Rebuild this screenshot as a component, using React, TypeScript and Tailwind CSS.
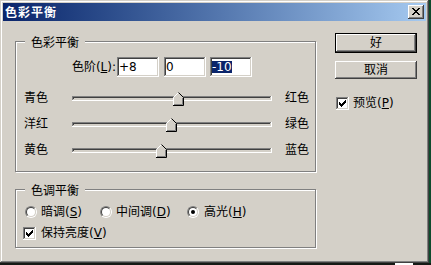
import React from "react";

const raised =
  "shadow-[inset_-1px_-1px_#404040,inset_1px_1px_#ffffff,inset_-2px_-2px_#808080,inset_2px_2px_#d4d0c8]";
const sunken =
  "shadow-[inset_-1px_-1px_#ffffff,inset_1px_1px_#808080,inset_-2px_-2px_#d4d0c8,inset_2px_2px_#404040]";

function CheckMark() {
  return (
    <svg width="7" height="7" viewBox="0 0 7 7">
      <path
        d="M0 2h1v3H0z M1 3h1v3H1z M2 4h1v3H2z M3 3h1v3H3z M4 2h1v3H4z M5 1h1v3H5z M6 0h1v3H6z"
        fill="#000"
      />
    </svg>
  );
}

function CheckBox() {
  return (
    <div className={`w-[13px] h-[13px] bg-white flex items-center justify-center shrink-0 ${sunken}`}>
      <CheckMark />
    </div>
  );
}

function Radio({ on }: { on?: boolean }) {
  return (
    <div className="w-[12px] h-[12px] rounded-full border border-t-[#808080] border-l-[#808080] border-r-white border-b-white flex shrink-0">
      <div className="flex-1 rounded-full border border-t-[#404040] border-l-[#404040] border-r-[#d4d0c8] border-b-[#d4d0c8] bg-white flex items-center justify-center">
        {on && <div className="w-[4px] h-[4px] rounded-full bg-black" />}
      </div>
    </div>
  );
}

function Thumb() {
  return (
    <svg width="11" height="14" viewBox="0 0 11 14">
      <polygon points="5.5,0 11,5.5 11,14 0,14 0,5.5" fill="#d4d0c8" />
      <polyline points="0.5,13 0.5,5.5 5.5,0.5" fill="none" stroke="#ffffff" strokeWidth="1" />
      <polyline points="5.5,0.5 10.5,5.5 10.5,13.5 0,13.5" fill="none" stroke="#000000" strokeWidth="1" />
      <polyline points="9.5,6 9.5,12.5 1,12.5" fill="none" stroke="#808080" strokeWidth="1" />
    </svg>
  );
}

function SliderRow({ left, right, pos }: { left: string; right: string; pos: number }) {
  return (
    <div className="h-[26px] flex pl-[8px]">
      <div className="w-[48px] h-[26px] flex items-center leading-[16px]">{left}</div>
      <div className={`relative w-[200px] h-[5px] mt-[11px] bg-[#d4d0c8] ${sunken}`}>
        <div className="absolute top-[-4px] flex" style={{ left: pos }}>
          <Thumb />
        </div>
      </div>
      <div className="ml-[13px] h-[26px] flex items-center leading-[16px]">{right}</div>
    </div>
  );
}

function CloseGlyph() {
  return (
    <svg width="8" height="7" viewBox="0 0 8 7">
      <path
        d="M0 0h2v1H0z M6 0h2v1H6z M1 1h2v1H1z M5 1h2v1H5z M2 2h4v1H2z M3 3h2v1H3z M2 4h4v1H2z M1 5h2v1H1z M5 5h2v1H5z M0 6h2v1H0z M6 6h2v1H6z"
        fill="#000"
      />
    </svg>
  );
}

export default function App() {
  return (
    <div className="w-[431px] h-[265px] bg-[#161a16] flex flex-col overflow-hidden text-black text-[12px] [font-family:'DejaVu_Sans','Noto_Sans_CJK_SC',sans-serif]">
      <div className="flex">
        <div className="w-[429px] h-[263px] shrink-0 bg-[#d4d0c8] p-[3px] flex flex-col shadow-[inset_-1px_-1px_#404040,inset_1px_1px_#d4d0c8,inset_-2px_-2px_#808080,inset_2px_2px_#ffffff]">
          {/* Title bar */}
          <div className="h-[18px] flex items-center bg-linear-to-r from-[#0a246a] to-[#a6caf0] pl-[2px] pr-[2px]">
            <span className="flex-1 text-white font-bold text-[12px] leading-[14px] tracking-[1px] pt-[1px]">
              色彩平衡
            </span>
            <div className={`w-[16px] h-[14px] bg-[#d4d0c8] flex items-start pl-[4px] pt-[3px] ${raised}`}>
              <CloseGlyph />
            </div>
          </div>

          {/* Body */}
          <div className="flex flex-1">
            <div className="ml-[12px] mt-[20px] w-[301px] flex flex-col">
              {/* Group 1 */}
              <div className="relative h-[131px] border border-[#808080] shadow-[inset_1px_1px_#ffffff,1px_1px_#ffffff] flex flex-col">
                <span className="absolute left-[9px] top-[-6px] h-[14px] leading-[14px] px-[6px] bg-[#d4d0c8]">
                  色彩平衡
                </span>
                <div className="mt-[15px] h-[20px] flex items-center">
                  <div className="w-[100px] text-right leading-[16px]">
                    色阶(<u>L</u>):
                  </div>
                  <div className={`ml-[1px] w-[42px] h-[20px] bg-white flex items-center pl-[2px] leading-[14px] ${sunken}`}>
                    +8
                  </div>
                  <div className={`ml-[5px] w-[42px] h-[20px] bg-white flex items-center pl-[2px] leading-[14px] ${sunken}`}>
                    0
                  </div>
                  <div className={`ml-[4px] w-[42px] h-[20px] bg-white flex items-center pl-[2px] leading-[14px] ${sunken}`}>
                    <span className="bg-[#0a246a] text-white h-[12px] leading-[12px]">-10</span>
                  </div>
                </div>
                <div className="mt-[8px] flex flex-col">
                  <SliderRow left="青色" right="红色" pos={101} />
                  <SliderRow left="洋红" right="绿色" pos={94} />
                  <SliderRow left="黄色" right="蓝色" pos={84} />
                </div>
              </div>

              {/* Group 2 */}
              <div className="relative mt-[17px] h-[59px] border border-[#808080] shadow-[inset_1px_1px_#ffffff,1px_1px_#ffffff] flex flex-col">
                <span className="absolute left-[9px] top-[-6px] h-[14px] leading-[14px] px-[6px] bg-[#d4d0c8]">
                  色调平衡
                </span>
                <div className="mt-[14px] h-[16px] flex items-center pl-[9px] leading-[16px]">
                  <div className="w-[75px] flex items-center gap-[4px]">
                    <Radio />
                    <span>
                      暗调(<u>S</u>)
                    </span>
                  </div>
                  <div className="w-[87px] flex items-center gap-[4px]">
                    <Radio />
                    <span>
                      中间调(<u>D</u>)
                    </span>
                  </div>
                  <div className="flex items-center gap-[5px]">
                    <Radio on />
                    <span>
                      高光(<u>H</u>)
                    </span>
                  </div>
                </div>
                <div className="mt-[5px] h-[16px] flex items-center pl-[7px] gap-[5px] leading-[16px]">
                  <CheckBox />
                  <span>
                    保持亮度(<u>V</u>)
                  </span>
                </div>
              </div>
            </div>

            {/* Buttons */}
            <div className="ml-[19px] mt-[12px] w-[82px] flex flex-col">
              <div className="w-[82px] h-[20px] border border-black bg-[#d4d0c8] flex">
                <div className={`flex-1 flex items-center justify-center leading-[14px] ${raised}`}>好</div>
              </div>
              <div className={`mt-[8px] w-[82px] h-[18px] bg-[#d4d0c8] flex items-center justify-center leading-[14px] ${raised}`}>
                取消
              </div>
              <div className="mt-[16px] h-[16px] flex items-center pl-[1px] gap-[4px] leading-[16px]">
                <CheckBox />
                <span>
                  预览(<u>P</u>)
                </span>
              </div>
            </div>
          </div>
        </div>
        <div className="flex-1 bg-[#0e4a2c]" />
      </div>
      <div className="flex-1 flex">
        <div className="ml-[395px] w-[18px] bg-white" />
      </div>
    </div>
  );
}
